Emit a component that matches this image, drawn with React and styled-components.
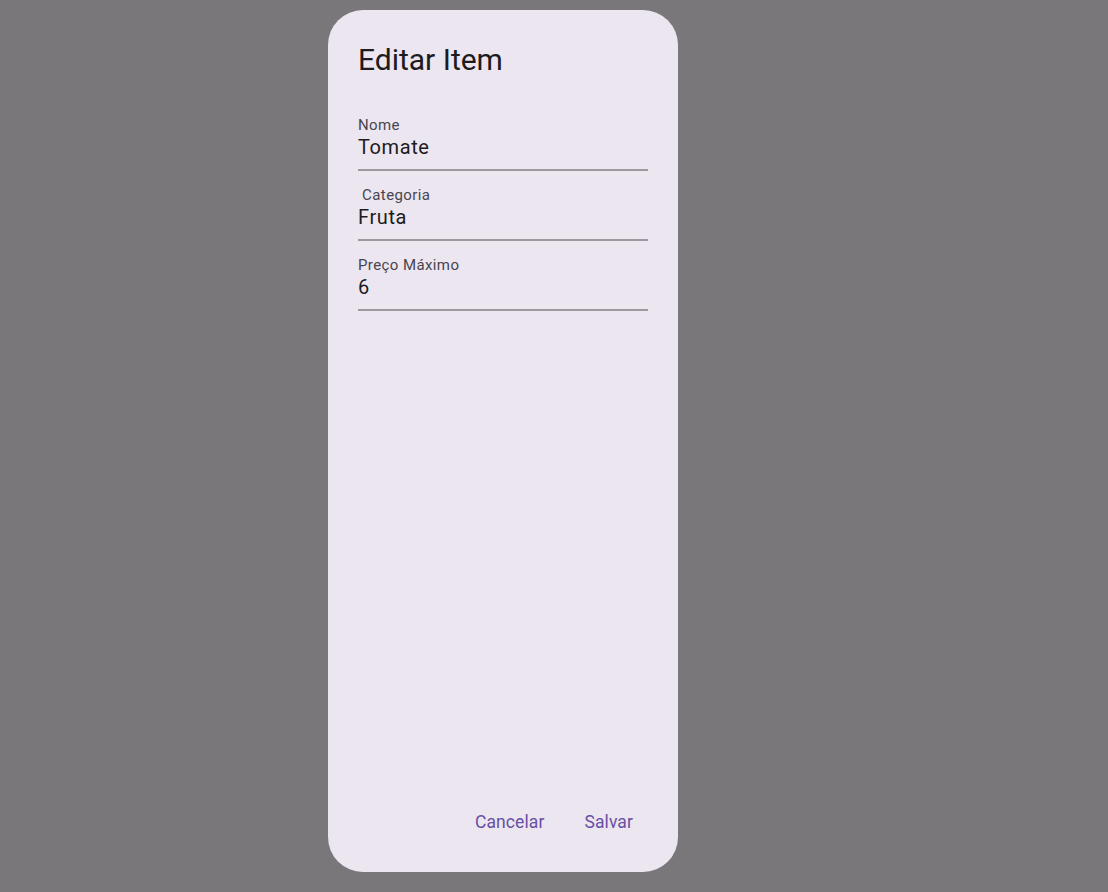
import React from "react";
import styled, { createGlobalStyle } from "styled-components";

const GlobalStyle = createGlobalStyle`
  html, body {
    margin: 0;
    padding: 0;
    height: 100%;
  }
  body {
    background: #79777a;
    font-family: Roboto, "Liberation Sans", sans-serif;
  }
`;

const Backdrop = styled.div`
  box-sizing: border-box;
  width: 1108px;
  height: 892px;
  padding: 10px 430px 20px 328px;
  display: flex;
`;

const Dialog = styled.div`
  box-sizing: border-box;
  flex: 1;
  background: #ece6f0;
  border-radius: 35px;
  padding: 30px 30px 25px;
  display: flex;
  flex-direction: column;
`;

const Title = styled.h1`
  margin: 0;
  font-size: 30px;
  line-height: 40px;
  font-weight: 400;
  color: #1d1b20;
`;

const Form = styled.div`
  margin-top: 21px;
  display: flex;
  flex-direction: column;
  flex: 1;
`;

const Field = styled.div`
  height: 70px;
  box-sizing: border-box;
  border-bottom: 2px solid #9d99a1;
  display: flex;
  flex-direction: column;
  justify-content: flex-end;
  padding-bottom: 9px;
`;

const Label = styled.span`
  font-size: 15px;
  line-height: 18px;
  letter-spacing: 0.4px;
  color: #49454f;
  white-space: pre;
`;

const Value = styled.span`
  font-size: 20px;
  line-height: 26px;
  letter-spacing: 0.6px;
  color: #1d1b20;
`;

const Actions = styled.div`
  display: flex;
  justify-content: flex-end;
  gap: 10px;
`;

const TextButton = styled.button`
  border: none;
  background: transparent;
  font-family: Roboto, "Liberation Sans", sans-serif;
  font-size: 17.5px;
  font-weight: 400;
  letter-spacing: 0.1px;
  color: #6750a4;
  padding: 0 15px;
  height: 50px;
  border-radius: 25px;
  cursor: pointer;
`;

const fields = [
  { label: "Nome", value: "Tomate" },
  { label: " Categoria", value: "Fruta" },
  { label: "Preço Máximo", value: "6" },
];

export default function App() {
  return (
    <>
      <GlobalStyle />
      <Backdrop>
        <Dialog>
          <Title>Editar Item</Title>
          <Form>
            {fields.map((f) => (
              <Field key={f.label}>
                <Label>{f.label}</Label>
                <Value>{f.value}</Value>
              </Field>
            ))}
          </Form>
          <Actions>
            <TextButton>Cancelar</TextButton>
            <TextButton>Salvar</TextButton>
          </Actions>
        </Dialog>
      </Backdrop>
    </>
  );
}
